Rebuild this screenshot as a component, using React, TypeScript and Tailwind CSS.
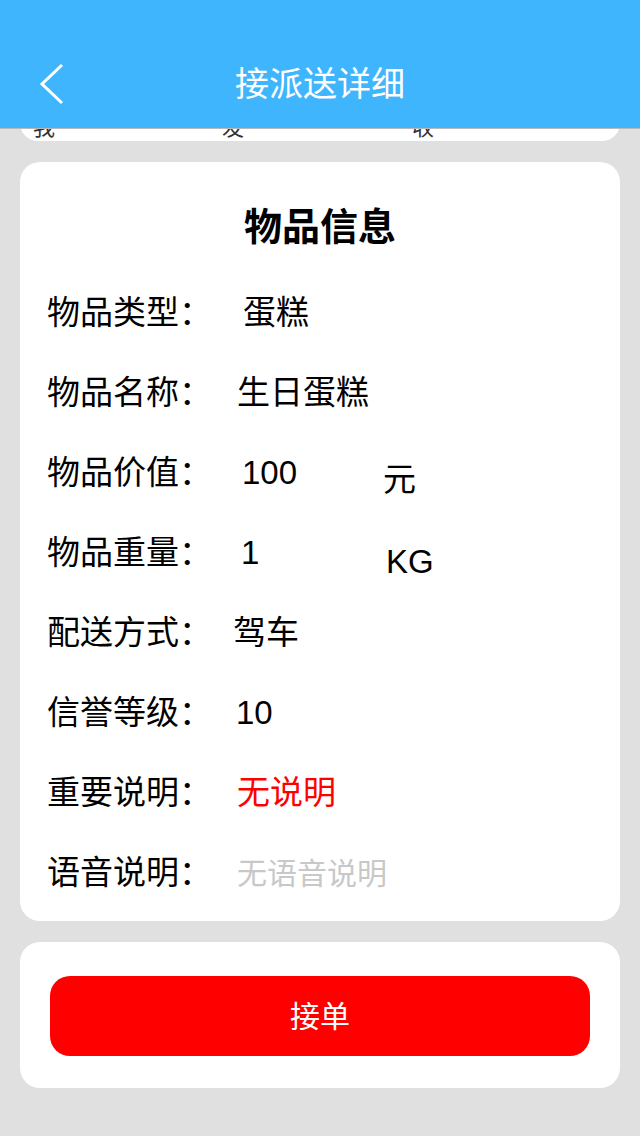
const font = "font-['Liberation_Sans','Noto_Sans_CJK_SC',sans-serif]";

type Row = {
  label: string;
  value: string;
  valueClass?: string;
  unit?: string;
  unitClass?: string;
};

const rows: Row[] = [
  { label: '物品类型：', value: '蛋糕', valueClass: 'ml-[6px]' },
  { label: '物品名称：', value: '生日蛋糕' },
  { label: '物品价值：', value: '100', valueClass: 'ml-[5px] w-[141px]', unit: '元', unitClass: 'mt-[14px]' },
  { label: '物品重量：', value: '1', valueClass: 'ml-[4px] w-[145px]', unit: 'KG', unitClass: 'mt-[18px]' },
  { label: '配送方式：', value: '驾车', valueClass: '-ml-[4px]' },
  { label: '信誉等级：', value: '10', valueClass: '-ml-[1px]' },
  { label: '重要说明：', value: '无说明', valueClass: 'text-[#ff0000]' },
  { label: '语音说明：', value: '无语音说明', valueClass: 'text-[#c8c8c8] text-[30px]' },
];

export default function App() {
  return (
    <div className={`relative min-h-screen bg-[#e0e0e0] ${font}`}>
      {/* 顶部导航 */}
      <header className="absolute top-0 left-0 right-0 z-10 h-[129px] bg-[#3fb5fd] border-b border-[#b8b8b8] flex items-end">
        <div className="relative w-full h-[88px] flex items-center justify-center">
          <button className="absolute left-[38px] top-[23px]">
            <svg width="28" height="42" viewBox="0 0 28 42" fill="none">
              <path d="M24 2 L4 21 L24 40" stroke="white" strokeWidth="3" />
            </svg>
          </button>
          <h1 className="text-white text-[34px] leading-none">接派送详细</h1>
        </div>
      </header>

      <div className="px-[20px] pt-[88px] pb-[48px]">
        {/* 被遮住的上一张卡片 */}
        <div className="h-[53px] bg-white rounded-b-[18px] flex items-end pb-[2px] pl-[13px] text-[22px] leading-none text-[#333]">
          <span className="w-[189px]">我</span>
          <span className="w-[190px]">发</span>
          <span>收</span>
        </div>

        {/* 物品信息 */}
        <div className="mt-[21px] bg-white rounded-[20px] pt-[40px] pb-[8px]">
          <h2 className="text-center text-[38px] leading-[50px] font-bold text-black mb-[21px]">物品信息</h2>
          {rows.map((r) => (
            <div key={r.label} className="h-[80px] flex items-center pl-[27px] text-[33px] text-black">
              <span className="w-[190px] shrink-0">{r.label}</span>
              <span className={`${r.valueClass ?? ''}`}>{r.value}</span>
              {r.unit && <span className={r.unitClass}>{r.unit}</span>}
            </div>
          ))}
        </div>

        {/* 接单 */}
        <div className="mt-[21px] bg-white rounded-[20px] pt-[34px] pb-[32px] px-[30px]">
          <button className="w-full h-[80px] rounded-[20px] bg-[#ff0000] text-white text-[30px]">接单</button>
        </div>
      </div>
    </div>
  );
}
